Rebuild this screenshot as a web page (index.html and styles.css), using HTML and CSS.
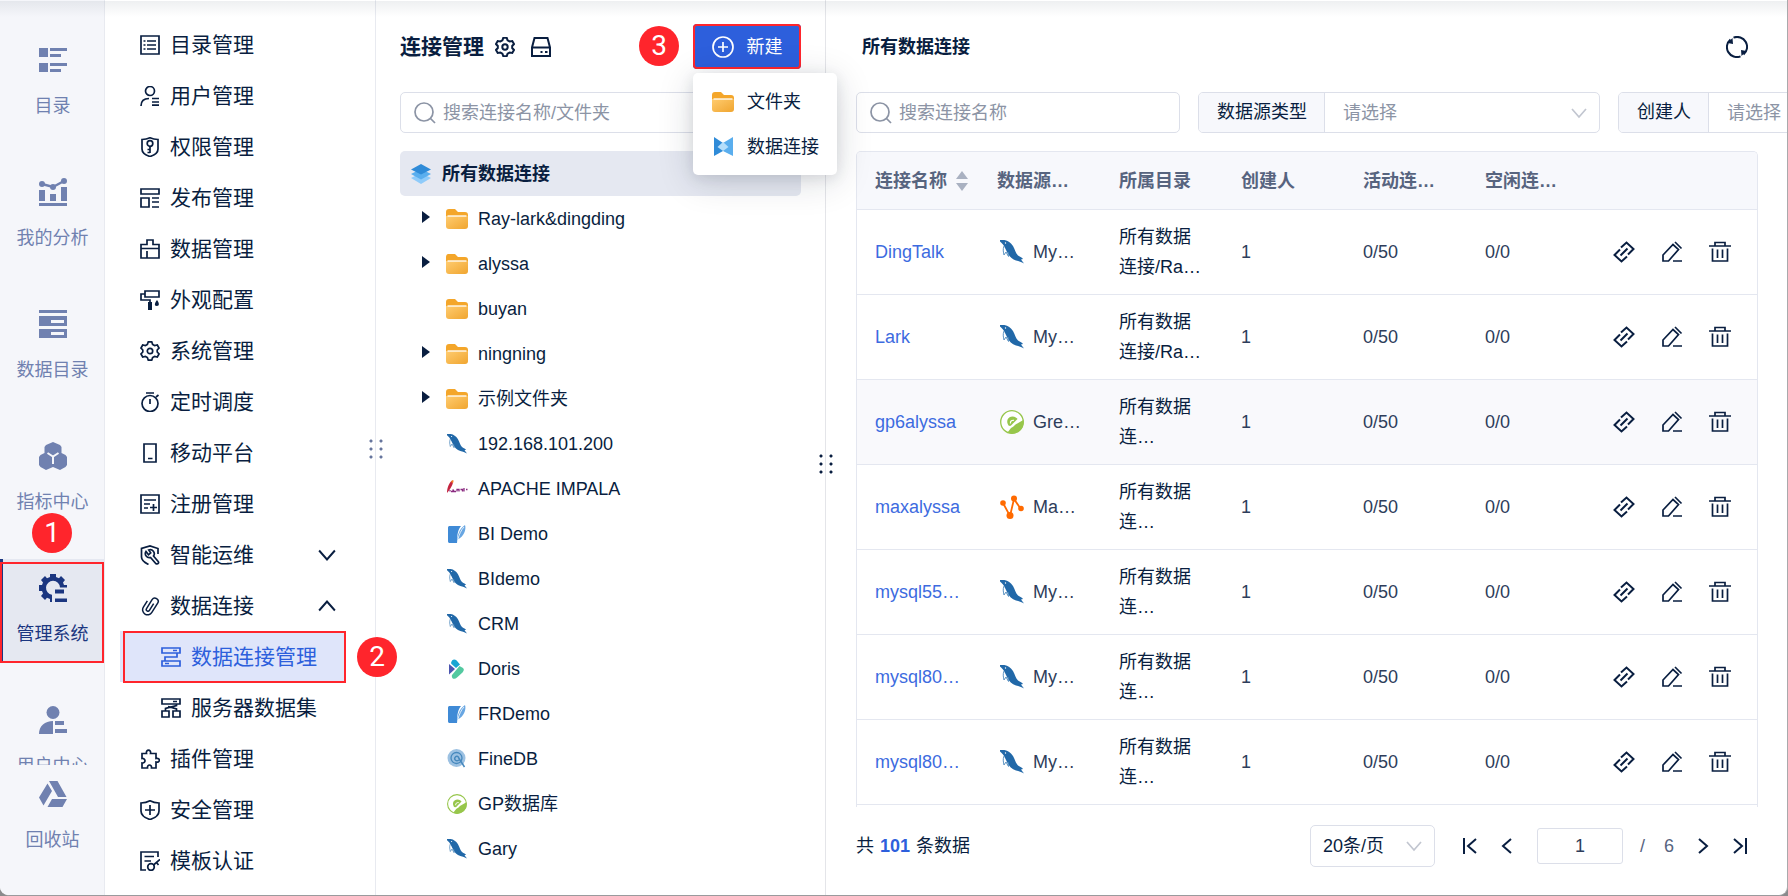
FILE: index.html
```html
<!DOCTYPE html>
<html lang="zh-CN">
<head>
<meta charset="utf-8">
<title>数据连接管理</title>
<link rel="stylesheet" href="styles.css">
</head>
<body>
<svg class="sprite" aria-hidden="true">
  <defs>
    <linearGradient id="folder-fill" x1="0" y1="0" x2="1" y2="1">
      <stop offset="0" stop-color="#ffcc70"/><stop offset="1" stop-color="#f0a52f"/>
    </linearGradient>
  </defs>

  <!-- primary navigation, solid -->
  <symbol id="n-catalog" viewBox="0 0 28 28"><path d="M0 2h9v9H0zM11 2h17v3H11zM11 8h11v3H11zM0 17h9v9H0zM11 17h17v3H11zM11 23h11v3H11z"/></symbol>
  <symbol id="n-analysis" viewBox="0 0 28 28"><path d="M0 12h6v11H0zM11 16h6v7h-6zM22 9h6v14h-6zM0 25h28v3H0z"/><circle cx="3" cy="6" r="3"/><circle cx="14" cy="9" r="3"/><circle cx="25" cy="3" r="3"/><path d="M3 6l11 3 11-6" fill="none" stroke="currentColor" stroke-width="2.500"/></symbol>
  <symbol id="n-data" viewBox="0 0 28 28"><path d="M0 0h28v3H0z"/><path fill-rule="evenodd" d="M0 6h28v10H0zM12 10v3h13v-3zM0 19h28v9H0zM12 22v3h13v-3z"/></symbol>
  <symbol id="n-metric" viewBox="0 0 28 28"><path d="M14 0l7 3 1.500 2v6l4 2 1.500 2v8l-1.500 2-5.500 3-7-3-7 3-5.500-3L0 23v-8l1.500-2 4-2V5L7 3z"/><path d="M8.500 11l5.500 3.500 5.500-3.500M14 14.500V22" fill="none" stroke="#f5f6fa" stroke-width="2"/></symbol>
  <symbol id="n-system" viewBox="0 0 28 28"><path d="M11 0h6v3l3 1.200L22 2l4 4-2 2.500 1 2.500h3v2.500h-7A7 7 0 1 0 13 20.800V28h-2v-3l-3-1.200L6 26l-4-4 2-2.500L3 17H0v-6h3l1-2.500L2 6l4-4 2 2.200L11 3z"/><path d="M16 15.500h9v4h-9zM16 24.500h12V28H16z"/></symbol>
  <symbol id="n-user" viewBox="0 0 28 28"><circle cx="14" cy="6.500" r="6.500"/><path d="M14 15v13H0C0 20 6 15 14 15zM16 15h9v4h-9zM16 23h12v4H16z"/></symbol>
  <symbol id="n-recycle" viewBox="0 0 28 28"><path d="M10 1h8.500L27.500 17H19zM8.500 3.500L13 11 4.500 25.500 0 17.500zM13 19h15l-4.500 8H8.500z"/></symbol>

  <!-- admin menu, outline -->
  <symbol id="m-list" viewBox="0 0 20 20"><path d="M1 1h18v18H1zM7 6h9M7 10h9M7 14h9M3.500 6h2M3.500 10h2M3.500 14h2"/></symbol>
  <symbol id="m-user" viewBox="0 0 20 20"><circle cx="10" cy="5" r="4.500"/><path d="M1 20c0-5 3-7.500 8-7.500M12 12.500h7M12 16h7M12 19.200h7"/></symbol>
  <symbol id="m-key" viewBox="0 0 20 20"><path d="M10 .8c3 1.400 5 1.700 8 1.700V12c0 4-3 6-8 7.500C5 18 2 16 2 12V2.500c3 0 5-.3 8-1.700z"/><circle cx="10" cy="6.500" r="2.800"/><path d="M10 9.300V16M10 12.500H7.500M10 15.500H7.500"/></symbol>
  <symbol id="m-publish" viewBox="0 0 20 20"><path d="M1 1h18v5H1zM1 10h8v9H1zM12 10h7M12 14h7M12 19h7"/></symbol>
  <symbol id="m-data" viewBox="0 0 20 20"><path d="M1 5.500h6V1h6v4.500h6V19H1zM1 9.500h18M7 12v7"/></symbol>
  <symbol id="m-paint" viewBox="0 0 20 20"><path d="M5 1h14v6H5zM5 4H1v6h9v3"/><path class="solid" d="M8 12h4v8H8zM17 10c2 2.500 3 6-.2 6S15 12.500 17 10z"/></symbol>
  <symbol id="m-gear" viewBox="0 0 20 20"><path d="M8.300.8h3.400l.9 2.600 2 1.100 2.700-.5 1.700 3-1.800 2v2l1.800 2-1.700 3-2.700-.5-2 1.100-.9 2.600H8.300l-.9-2.600-2-1.100-2.700.5-1.700-3 1.800-2V9L1 7l1.700-3 2.700.5 2-1.100z"/><circle cx="10" cy="10" r="2.700"/></symbol>
  <symbol id="m-timer" viewBox="0 0 20 20"><circle cx="10" cy="11.500" r="8"/><path d="M6 1h8M10 7v5M16 5l2.500-2"/></symbol>
  <symbol id="m-phone" viewBox="0 0 20 20"><path d="M4 1h12v18H4zM8 15.500h4.500"/></symbol>
  <symbol id="m-register" viewBox="0 0 20 20"><path d="M1 1h18v18H1zM4 6h12M4 10h6M4 14h4M10 13.500h7M13.500 10v7"/></symbol>
  <symbol id="m-wrench" viewBox="0 0 20 20"><path d="M18 9V3.500L10 1 1.500 3.500V12c0 3.500 3 5.500 7 7.500"/><path d="M6 6.500a4 4 0 0 0 4.500 6l5.500 6.200c2 .8 3.200-.8 2.200-2.200L13.500 11a4 4 0 0 0-4.800-6l2 2.800-2.200 2z"/></symbol>
  <symbol id="m-clip" viewBox="0 0 20 20"><path transform="rotate(32 10 10)" stroke-width="1.500" d="M5 7v7.500a5 5 0 0 0 10 0V3.500a3.300 3.300 0 0 0-6.600 0V14a1.700 1.700 0 0 0 3.400 0V6"/></symbol>
  <symbol id="m-conn" viewBox="0 0 20 20"><path d="M1 1h18v5H1zM1 14h18v5H1zM12 3.500h4M4 16.500h4M16 6v4H4v4"/></symbol>
  <symbol id="m-server" viewBox="0 0 20 20"><path d="M1 1h18v5H1zM1 13h7v6H1zM12 13h7v6h-7zM12 3.500h4M15.500 6v1.500L4.500 10.500V13M7 8.500L15.500 11v2"/></symbol>
  <symbol id="m-plugin" viewBox="0 0 20 20"><path d="M2 4.500h4.500C5.500 0 11.500 0 10.500 4.500H16v5c4.500-1 4.500 4.500 0 3.500v6h-4.500c.5-4-4.500-4-4 0H2v-5c4 .5 4-5 0-4.500z"/></symbol>
  <symbol id="m-shield" viewBox="0 0 20 20"><path d="M10 .8c3 1.700 5.500 2.200 9 2.200v8c0 4.500-4 7-9 8.500-5-1.500-9-4-9-8.500V3c3.500 0 6-.5 9-2.200zM10 5v10M5 10h10"/></symbol>
  <symbol id="m-cert" viewBox="0 0 20 20"><path d="M18 6V1H1v18h5M4.500 5.500H14M4.500 10H11"/><circle cx="11" cy="16" r="3.300"/><path d="M13.500 14L20 8.500M16.500 11.500l2 2.500"/></symbol>
  <symbol id="i-drive" viewBox="0 0 20 20"><path d="M3.500 1h13L19 10.500V19H1v-8.500zM1 10.500h18M9.500 15h2M14 15h2.500"/></symbol>
  <symbol id="i-search" viewBox="0 0 22 22"><circle cx="10" cy="10" r="9"/><path d="M16.500 16.500L21 21"/></symbol>
  <symbol id="i-plus" viewBox="0 0 22 22"><circle cx="11" cy="11" r="10"/><path d="M11 6v10M6 11h10"/></symbol>
  <symbol id="i-refresh" viewBox="0 0 22 22"><path d="M7.500 1.600a10 10 0 0 1 10 17M14.500 20.400a10 10 0 0 1-10-17"/><path class="solid" d="M1.500 7l5-5 .5 6zM20.500 15l-5 5-.5-6z"/></symbol>
  <symbol id="i-down" viewBox="0 0 16 16"><path d="M1 4l7 8 7-8"/></symbol>
  <symbol id="i-up" viewBox="0 0 16 16"><path d="M1 12l7-8 7 8"/></symbol>

  <!-- row actions -->
  <symbol id="a-link" viewBox="0 0 22 22"><path stroke-width="2" d="M8 6.500L13.500 1.500 20.500 8 15 13.500M14 15.500L8.500 20.500 1.500 14 7 8.500M7.500 14.500l7-7"/></symbol>
  <symbol id="a-edit" viewBox="0 0 22 22"><path d="M2 14L12 3.500l5.500 5L7.500 20H2zM14 1l6.500 6.500M12 20h9"/></symbol>
  <symbol id="a-trash" viewBox="0 0 22 22"><path d="M0 5h22M6 5V1.500h10V5M3.500 7.500V20h15V7.500M8.500 8.500V17M13.500 8.500V17"/></symbol>

  <!-- tree and source icons -->
  <symbol id="t-folder" viewBox="0 0 22 20"><path d="M0 3c0-2 1-3 3-3h6l3 3h7c2 0 3 1 3 3v5H0z" fill="#f4a62a"/><path d="M0 7h22v10c0 2-1 3-3 3H3c-2 0-3-1-3-3z" fill="url(#folder-fill)"/><path d="M1.500 7h19" stroke="#fff" stroke-width="1.300"/></symbol>
  <symbol id="t-layers" viewBox="0 0 20 20"><path d="M10 9l10 5-10 6L0 14z" fill="#8fcbfa"/><path d="M10 5l10 5-10 5.500L0 10z" fill="#5aaeee"/><path d="M10 0l10 5.500-10 5L0 5.500z" fill="#2f8bd8"/></symbol>
  <symbol id="t-conn" viewBox="0 0 20 20"><path d="M1 0l9 6v8l-9 5z" fill="#2f8bd8"/><path d="M20 0l-10 6v8l10 5z" fill="#5aaeee"/><path d="M10 5l5.500 5L10 14l-5.500-4z" fill="#b5defb"/></symbol>
  <symbol id="d-mysql" viewBox="0 0 24 24"><path d="M0 0c6-.8 10 1.500 13 6 2.200 3.600 2.500 7 5 9.500 2.500 1.700 4 2 5 3.500l-2 .5 3 4c-2.500-1.500-5-2.200-8-3-4-1-7-4.500-9-8.500C5.500 9 4 4.500 0 1.500z" fill="#2168a8"/><path d="M4 6c-1.500 4-.5 6 0 9l2-3 2.500 4.500L8 12" fill="none" stroke="#5a92c2" stroke-width="1"/><circle cx="5.500" cy="3" r=".7" fill="#fff"/></symbol>
  <symbol id="d-impala" viewBox="0 0 22 20"><path d="M1 14C1 9 3 4 6 1.500c1.500 1 1 3 0 5-1.300 3-3 5-5 7.500z" fill="#c4243f"/><path d="M5 3c1-1.600 1.500-2 2.200-2 .5 1 .3 2-.2 3z" fill="#f0852a"/><path d="M5 12.500h2v-2l1 2h2M11 12.500v-2h2v2M14.500 10.500h2v2M18 9v3.500M20 10.500h1.500M4 11v1.500" fill="none" stroke="#8a2a80" stroke-width="1.300"/></symbol>
  <symbol id="d-sqlite" viewBox="0 0 20 20"><path d="M1 4c0-1.500.5-2 2-2h11c-3 4-4 8-4 17H3c-1.500 0-2-.5-2-2z" fill="#3f8ad6"/><path d="M18 1c1.500 4-1 12-7.500 14.500L10 19c0-7 2-14 8-18z" fill="#68a6e2"/><path d="M17 3c-3 3-5 8-6 12" fill="none" stroke="#fff" stroke-width=".8"/></symbol>
  <symbol id="d-doris" viewBox="0 0 20 20"><path d="M2 5l6 5-6 5.500z" fill="#4b55b0"/><path d="M4 4c1-5 5-4 6.500-1.500L13 5.500 9 9 4.500 5z" fill="#17a5d2"/><path d="M12.500 7l3.500 2c1.500 1.500.8 3-.5 4.500L10 18.500c-2.500 2.500-6 1-5-2.500z" fill="#53c9a0"/></symbol>
  <symbol id="d-finedb" viewBox="0 0 20 20"><circle cx="9.500" cy="9" r="9" fill="#9cc1e2"/><circle cx="9.500" cy="9" r="5.500" fill="none" stroke="#4688bd" stroke-width="1.300"/><path d="M12 11c-3 2-5-.5-4-2.500s3.500-1.500 4 1l5.500 8.500" fill="none" stroke="#4688bd" stroke-width="1.500"/></symbol>
  <symbol id="d-green" viewBox="0 0 24 24"><circle cx="12" cy="12" r="11.300" fill="#fff" stroke="#97c64b" stroke-width="1.300"/><path d="M23.300 10A11.300 11.300 0 0 1 7.500 22.500L11 18c2-.8 3-2 4.500-3.500z" fill="#97c64b"/><path d="M8.500 15.500C5.500 11 8 6.500 12.500 6.500c2.500 0 4.500 1.500 5 2.500L11 15.500l-1 .5z" fill="#97c64b"/><path d="M10.500 13.500c-.5-2 1-3.500 3.500-3.200" fill="none" stroke="#fff" stroke-width="1.200"/></symbol>
  <symbol id="d-max" viewBox="0 0 24 24"><path d="M3 8l7 13 4-17 7.500 11" fill="none" stroke="#ff6a00" stroke-width="1.800"/><g fill="#ff6a00"><circle cx="3" cy="8" r="2.800"/><circle cx="10" cy="20.500" r="3.500"/><circle cx="14" cy="3.500" r="3"/><circle cx="21" cy="13.500" r="2.800"/></g></symbol>
</svg>

<div class="window">
  <nav class="rail" aria-label="主导航">
    <div class="rail-list">
      <a class="rail-item" href="#"><svg><use href="#n-catalog"/></svg><span>目录</span></a>
      <a class="rail-item" href="#"><svg><use href="#n-analysis"/></svg><span>我的分析</span></a>
      <a class="rail-item" href="#"><svg><use href="#n-data"/></svg><span>数据目录</span></a>
      <a class="rail-item" href="#"><svg><use href="#n-metric"/></svg><span>指标中心</span></a>
      <a class="rail-item active" href="#"><svg><use href="#n-system"/></svg><span>管理系统</span><b class="step step-1">1</b></a>
      <a class="rail-item" href="#"><svg><use href="#n-user"/></svg><span>用户中心</span></a>
    </div>
    <a class="rail-item rail-foot" href="#"><svg><use href="#n-recycle"/></svg><span>回收站</span></a>
  </nav>

  <nav class="menu" aria-label="管理系统">
    <a class="menu-item" href="#"><svg><use href="#m-list"/></svg><span>目录管理</span></a>
    <a class="menu-item" href="#"><svg><use href="#m-user"/></svg><span>用户管理</span></a>
    <a class="menu-item" href="#"><svg><use href="#m-key"/></svg><span>权限管理</span></a>
    <a class="menu-item" href="#"><svg><use href="#m-publish"/></svg><span>发布管理</span></a>
    <a class="menu-item" href="#"><svg><use href="#m-data"/></svg><span>数据管理</span></a>
    <a class="menu-item" href="#"><svg><use href="#m-paint"/></svg><span>外观配置</span></a>
    <a class="menu-item" href="#"><svg><use href="#m-gear"/></svg><span>系统管理</span></a>
    <a class="menu-item" href="#"><svg><use href="#m-timer"/></svg><span>定时调度</span></a>
    <a class="menu-item" href="#"><svg><use href="#m-phone"/></svg><span>移动平台</span></a>
    <a class="menu-item" href="#"><svg><use href="#m-register"/></svg><span>注册管理</span></a>
    <a class="menu-item" href="#"><svg><use href="#m-wrench"/></svg><span>智能运维</span><svg class="chevron"><use href="#i-down"/></svg></a>
    <a class="menu-item" href="#"><svg><use href="#m-clip"/></svg><span>数据连接</span><svg class="chevron"><use href="#i-up"/></svg></a>
    <a class="menu-item sub active" href="#"><svg><use href="#m-conn"/></svg><span>数据连接管理</span><b class="step step-2">2</b></a>
    <a class="menu-item sub" href="#"><svg><use href="#m-server"/></svg><span>服务器数据集</span></a>
    <a class="menu-item" href="#"><svg><use href="#m-plugin"/></svg><span>插件管理</span></a>
    <a class="menu-item" href="#"><svg><use href="#m-shield"/></svg><span>安全管理</span></a>
    <a class="menu-item" href="#"><svg><use href="#m-cert"/></svg><span>模板认证</span></a>
    <i class="grip grip-menu"></i>
  </nav>

  <section class="connections">
    <header class="panel-head">
      <h1>连接管理</h1>
      <button class="icon-btn" aria-label="设置"><svg><use href="#m-gear"/></svg></button>
      <button class="icon-btn" aria-label="驱动管理"><svg><use href="#i-drive"/></svg></button>
      <div class="create">
        <b class="step step-3">3</b>
        <button class="create-btn"><svg><use href="#i-plus"/></svg><span>新建</span></button>
        <div class="dropdown">
          <button><svg><use href="#t-folder"/></svg><span>文件夹</span></button>
          <button><svg><use href="#t-conn"/></svg><span>数据连接</span></button>
        </div>
      </div>
    </header>
    <label class="search"><svg><use href="#i-search"/></svg><input type="text" aria-label="搜索连接" placeholder="搜索连接名称/文件夹"></label>
    <ul class="tree">
      <li class="root"><svg><use href="#t-layers"/></svg><span>所有数据连接</span></li>
      <li class="parent"><svg class="folder"><use href="#t-folder"/></svg><span>Ray-lark&amp;dingding</span></li>
      <li class="parent"><svg class="folder"><use href="#t-folder"/></svg><span>alyssa</span></li>
      <li><svg class="folder"><use href="#t-folder"/></svg><span>buyan</span></li>
      <li class="parent"><svg class="folder"><use href="#t-folder"/></svg><span>ningning</span></li>
      <li class="parent"><svg class="folder"><use href="#t-folder"/></svg><span>示例文件夹</span></li>
      <li><svg><use href="#d-mysql"/></svg><span>192.168.101.200</span></li>
      <li><svg class="folder"><use href="#d-impala"/></svg><span>APACHE IMPALA</span></li>
      <li><svg><use href="#d-sqlite"/></svg><span>BI Demo</span></li>
      <li><svg><use href="#d-mysql"/></svg><span>BIdemo</span></li>
      <li><svg><use href="#d-mysql"/></svg><span>CRM</span></li>
      <li><svg><use href="#d-doris"/></svg><span>Doris</span></li>
      <li><svg><use href="#d-sqlite"/></svg><span>FRDemo</span></li>
      <li><svg><use href="#d-finedb"/></svg><span>FineDB</span></li>
      <li><svg><use href="#d-green"/></svg><span>GP数据库</span></li>
      <li><svg><use href="#d-mysql"/></svg><span>Gary</span></li>
    </ul>
    <i class="grip grip-tree"></i>
  </section>

  <main class="content">
    <header class="content-head">
      <h2>所有数据连接</h2>
      <button class="icon-btn refresh" aria-label="刷新"><svg><use href="#i-refresh"/></svg></button>
    </header>
    <div class="filters">
      <label class="search"><svg><use href="#i-search"/></svg><input type="text" aria-label="搜索名称" placeholder="搜索连接名称"></label>
      <div class="filter">
        <label for="source">数据源类型</label>
        <div class="select"><select id="source"><option>请选择</option></select><svg><use href="#i-down"/></svg></div>
      </div>
      <div class="filter">
        <label for="creator">创建人</label>
        <div class="select"><select id="creator"><option>请选择</option></select><svg><use href="#i-down"/></svg></div>
      </div>
    </div>
    <div class="table-box">
      <table>
        <colgroup><col class="c"><col class="c"><col class="c"><col class="c"><col class="c"><col class="c"><col></colgroup>
        <thead>
          <tr><th><span class="sortable">连接名称</span></th><th>数据源…</th><th>所属目录</th><th>创建人</th><th>活动连…</th><th>空闲连…</th><th></th></tr>
        </thead>
        <tbody>
          <tr><td><a href="#">DingTalk</a></td><td><span class="source"><svg><use href="#d-mysql"/></svg>My…</span></td><td class="dir">所有数据<br>连接/Ra…</td><td>1</td><td>0/50</td><td>0/0</td><td><div class="actions"><button aria-label="测试"><svg><use href="#a-link"/></svg></button><button aria-label="编辑"><svg><use href="#a-edit"/></svg></button><button aria-label="删除"><svg><use href="#a-trash"/></svg></button></div></td></tr>
          <tr><td><a href="#">Lark</a></td><td><span class="source"><svg><use href="#d-mysql"/></svg>My…</span></td><td class="dir">所有数据<br>连接/Ra…</td><td>1</td><td>0/50</td><td>0/0</td><td><div class="actions"><button aria-label="测试"><svg><use href="#a-link"/></svg></button><button aria-label="编辑"><svg><use href="#a-edit"/></svg></button><button aria-label="删除"><svg><use href="#a-trash"/></svg></button></div></td></tr>
          <tr class="hover"><td><a href="#">gp6alyssa</a></td><td><span class="source"><svg><use href="#d-green"/></svg>Gre…</span></td><td class="dir">所有数据<br>连…</td><td>1</td><td>0/50</td><td>0/0</td><td><div class="actions"><button aria-label="测试"><svg><use href="#a-link"/></svg></button><button aria-label="编辑"><svg><use href="#a-edit"/></svg></button><button aria-label="删除"><svg><use href="#a-trash"/></svg></button></div></td></tr>
          <tr><td><a href="#">maxalyssa</a></td><td><span class="source"><svg><use href="#d-max"/></svg>Ma…</span></td><td class="dir">所有数据<br>连…</td><td>1</td><td>0/50</td><td>0/0</td><td><div class="actions"><button aria-label="测试"><svg><use href="#a-link"/></svg></button><button aria-label="编辑"><svg><use href="#a-edit"/></svg></button><button aria-label="删除"><svg><use href="#a-trash"/></svg></button></div></td></tr>
          <tr><td><a href="#">mysql55…</a></td><td><span class="source"><svg><use href="#d-mysql"/></svg>My…</span></td><td class="dir">所有数据<br>连…</td><td>1</td><td>0/50</td><td>0/0</td><td><div class="actions"><button aria-label="测试"><svg><use href="#a-link"/></svg></button><button aria-label="编辑"><svg><use href="#a-edit"/></svg></button><button aria-label="删除"><svg><use href="#a-trash"/></svg></button></div></td></tr>
          <tr><td><a href="#">mysql80…</a></td><td><span class="source"><svg><use href="#d-mysql"/></svg>My…</span></td><td class="dir">所有数据<br>连…</td><td>1</td><td>0/50</td><td>0/0</td><td><div class="actions"><button aria-label="测试"><svg><use href="#a-link"/></svg></button><button aria-label="编辑"><svg><use href="#a-edit"/></svg></button><button aria-label="删除"><svg><use href="#a-trash"/></svg></button></div></td></tr>
          <tr><td><a href="#">mysql80…</a></td><td><span class="source"><svg><use href="#d-mysql"/></svg>My…</span></td><td class="dir">所有数据<br>连…</td><td>1</td><td>0/50</td><td>0/0</td><td><div class="actions"><button aria-label="测试"><svg><use href="#a-link"/></svg></button><button aria-label="编辑"><svg><use href="#a-edit"/></svg></button><button aria-label="删除"><svg><use href="#a-trash"/></svg></button></div></td></tr>
        </tbody>
      </table>
    </div>
    <footer class="pager">
      <p>共 <strong>101</strong> 条数据</p>
      <div class="select page-size"><select aria-label="每页条数"><option>20条/页</option></select><svg><use href="#i-down"/></svg></div>
      <button aria-label="首页"><svg viewBox="0 0 16 16"><path d="M2 0v16M14 1L6 8l8 7"/></svg></button>
      <button aria-label="上一页"><svg viewBox="0 0 16 16"><path d="M12 1L4 8l8 7"/></svg></button>
      <input type="text" aria-label="页码" value="1">
      <span class="total"><span>/</span><span>6</span></span>
      <button aria-label="下一页"><svg viewBox="0 0 16 16"><path d="M4 1l8 7-8 7"/></svg></button>
      <button aria-label="末页"><svg viewBox="0 0 16 16"><path d="M2 1l8 7-8 7M14 0v16"/></svg></button>
    </footer>
  </main>
</div>
</body>
</html>
```

FILE: styles.css
```css
:root {
  --ink: #091e40;
  --muted: #8c94a5;
  --line: #dcdfe9;
  --rail: #7081b0;
  --blue: #2d5fdc;
  --red: #ff252c;
}

* { box-sizing: border-box; }

body {
  margin: 0;
  background: #8a8a8c;
  color: var(--ink);
  font: 18px/30px "Liberation Sans", "Noto Sans CJK SC", sans-serif;
}

a { color: inherit; text-decoration: none; }
button { padding: 0; border: 0; background: none; color: inherit; font: inherit; }
input, select { font: inherit; color: inherit; outline: 0; }
h1, h2, p, ul { margin: 0; padding: 0; }
svg { flex: none; display: block; fill: none; stroke: currentColor; stroke-width: 1.7; }
.solid { fill: currentColor; stroke: none; }
.sprite { position: absolute; width: 0; height: 0; }

.window {
  position: relative;
  display: flex;
  height: 100vh;
  overflow: hidden;
  background: #fff;
  border-right: 1px solid #a9a9ac;
  border-bottom: 1px solid #9a9a9d;
  border-radius: 0 0 9px 9px;
}
.window::before {
  content: "";
  position: absolute;
  z-index: 5;
  inset: 1px 0 auto;
  height: 16px;
  background: linear-gradient(rgba(40, 60, 80, .08), rgba(40, 60, 80, 0));
  pointer-events: none;
}

/* numbered callouts */
.step {
  position: absolute;
  z-index: 4;
  width: 40px;
  height: 40px;
  border-radius: 50%;
  background: var(--red);
  color: #fff;
  font: 400 28px/40px Roboto, sans-serif;
  text-align: center;
}
.step-1 { left: 29px; top: -46px; }
.step-2 { right: -51px; top: 6px; }
.step-3 { right: 122px; top: 2px; }

/* primary rail */
.rail {
  flex: none;
  display: flex;
  flex-direction: column;
  width: 105px;
  background: #f5f6fa;
  border-right: 1px solid #e8eaf0;
  color: var(--rail);
}
.rail-list {
  flex: 1;
  min-height: 0;
  overflow: hidden;
  display: flex;
  flex-direction: column;
  gap: 28px;
  padding-top: 31px;
}
.rail-item {
  position: relative;
  flex: none;
  display: flex;
  flex-direction: column;
  align-items: center;
  gap: 17px;
  height: 104px;
  padding: 15px 0 0 1px;
}
.rail-item svg { width: 28px; height: 28px; fill: currentColor; stroke: none; }
.rail-item.active { background: #e5e8f1; border-left: 3px solid #1b3680; padding: 15px 2px 0 0; color: #1b3680; }
.rail-item.active::after {
  content: "";
  position: absolute;
  inset: 3px 0 0 -3px;
  border: 2px solid var(--red);
}
.rail-foot { height: 130px; }

/* admin menu */
.menu {
  position: relative;
  flex: none;
  width: 271px;
  padding: 19px 29px 0 15px;
  border-right: 1px solid #e8eaf0;
}
.menu-item {
  position: relative;
  display: flex;
  align-items: center;
  gap: 10px;
  height: 51px;
  padding: 0 10px 0 20px;
  font-size: 21px;
}
.menu-item > svg { width: 20px; height: 20px; }
.menu-item > .chevron { width: 18px; height: 18px; margin-left: auto; }
.menu-item.sub { padding-left: 41px; }
.menu-item.active { background: #dfe5fa; color: var(--blue); }
.menu-item.active::after {
  content: "";
  position: absolute;
  inset: 0 0 -1px 3px;
  border: 2px solid var(--red);
}

/* drag handles: 2 x 3 dots */
.grip {
  position: absolute;
  z-index: 2;
  width: 14px;
  height: 20px;
  background: radial-gradient(circle, currentColor 1px, transparent 2px) -3px -2px / 10px 8px;
}
.grip-menu { right: -8px; top: 439px; color: #66759d; }
.grip-tree { right: -8px; top: 454px; color: var(--ink); }

/* connection tree */
.connections {
  position: relative;
  flex: none;
  width: 450px;
  padding: 24px 24px 0;
  border-right: 1px solid #e4e5e9;
}
.panel-head { display: flex; align-items: center; gap: 14px; height: 45px; }
.panel-head h1 { font-size: 21px; margin-right: -3px; }
.icon-btn { margin-right: 2px; }
.icon-btn svg { width: 20px; height: 20px; }
.panel-head .icon-btn svg { stroke-width: 2; }
.create { position: relative; margin-left: auto; }
.create-btn {
  display: flex;
  align-items: center;
  justify-content: center;
  gap: 13px;
  width: 108px;
  height: 45px;
  border-radius: 4px;
  background: var(--blue);
  color: #fff;
  outline: 2px solid var(--red);
  outline-offset: -2px;
}
.create-btn svg { width: 22px; height: 22px; }
.dropdown {
  position: absolute;
  z-index: 3;
  left: 0;
  top: 49px;
  width: 144px;
  padding: 6px 0;
  border-radius: 5px;
  background: #fff;
  box-shadow: 0 6px 36px rgba(20, 30, 50, .16), 0 3px 14px rgba(20, 30, 50, .1);
}
.dropdown button { display: flex; align-items: center; gap: 13px; width: 100%; height: 45px; padding-left: 19px; }
.dropdown svg { width: 22px; height: 20px; stroke: none; }

.search {
  display: flex;
  align-items: center;
  gap: 7px;
  height: 41px;
  padding: 0 13px;
  border: 1px solid var(--line);
  border-radius: 5px;
  background: #fff;
  color: var(--muted);
}
.search svg { width: 22px; height: 22px; }
.search input { flex: 1; min-width: 0; padding: 0; border: 0; background: none; }
.search input::placeholder { color: var(--muted); opacity: 1; }
.connections .search { margin: 23px 0 18px; }

.tree { list-style: none; }
.tree li { display: flex; align-items: center; gap: 10px; height: 45px; padding-left: 47px; }
.tree svg { width: 20px; height: 20px; stroke: none; }
.tree li svg:not(.folder) { margin-right: 1px; }
.tree .folder { width: 22px; margin-left: -1px; }
.tree .root { padding-left: 11px; border-radius: 5px; background: #e5e8f1; font-weight: 700; }
.tree .parent { padding-left: 22px; }
.tree .parent::before {
  content: "";
  border: solid transparent;
  border-width: 6px 0 6px 8px;
  border-left-color: var(--ink);
  margin: 0 7px 4px 0;
}

/* main panel */
.content {
  flex: 1;
  min-width: 0;
  overflow: hidden;
  padding: 24px 29px 0 30px;
}
.content-head { display: flex; align-items: center; justify-content: space-between; height: 45px; padding: 0 8px 0 6px; }
.content-head h2 { font-size: 18px; }
.refresh svg { width: 22px; height: 22px; stroke-width: 2; }
.filters { display: flex; gap: 18px; margin: 23px 0 18px; }
.filters .search { flex: none; width: 324px; }
.filter {
  flex: none;
  display: flex;
  width: 402px;
  height: 41px;
  border: 1px solid var(--line);
  border-radius: 5px;
  overflow: hidden;
}
.filter label { padding: 4px 17px 4px 18px; border-right: 1px solid var(--line); background: #f7f8fc; }
.select { position: relative; flex: 1; }
.select select { width: 100%; height: 100%; padding: 0 18px; border: 0; background: none; appearance: none; color: var(--muted); }
.select svg { position: absolute; right: 12px; top: 12px; width: 16px; height: 16px; color: #c2c6d0; pointer-events: none; }

.table-box { padding-bottom: 2px; border: 1px solid #e4e7f0; border-bottom: 0; border-radius: 5px 5px 0 0; overflow: hidden; }
table { width: 100%; table-layout: fixed; border-collapse: collapse; }
.c { width: 122px; }
th, td { padding: 12px 0 12px 18px; border-bottom: 1px solid #e4e7f0; text-align: left; white-space: nowrap; }
th { padding: 14px 0 13px 18px; background: #f7f8fc; color: #57647f; }
td { color: #2e3d5b; }
td a { color: #3d6be0; }
.dir { color: var(--ink); }
.hover { background: #f9f9fc; }
.sortable { display: flex; align-items: center; gap: 9px; }
.sortable::after {
  content: "";
  width: 12px;
  height: 20px;
  background: #a9b1c1;
  clip-path: polygon(50% 0, 100% 40%, 0 40%, 0 60%, 100% 60%, 50% 100%, 0 60%, 0 40%);
}
.source { display: flex; align-items: center; gap: 9px; padding-left: 3px; }
.source svg { width: 24px; height: 24px; stroke: none; }
.actions { display: flex; justify-content: flex-end; gap: 26px; padding-right: 26px; color: var(--ink); }
.actions svg { width: 22px; height: 22px; }

.pager { display: flex; align-items: center; padding-top: 18px; }
.pager p { margin-right: auto; }
.pager strong { margin: 0 1px; color: var(--blue); }
.pager .page-size { flex: none; width: 125px; height: 42px; margin-right: 17px; border: 1px solid var(--line); border-radius: 5px; }
.page-size select { padding: 0 12px; color: var(--ink); }
.pager button { width: 37px; height: 40px; display: grid; place-items: center; }
.pager button svg { width: 16px; height: 16px; stroke-width: 2; }
.pager input { width: 86px; height: 36px; margin: 0 13px 0 11px; border: 1px solid var(--line); border-radius: 3px; text-align: center; color: #2e3d5b; }
.total { display: flex; gap: 19px; margin: 0 10px 0 4px; color: #57647f; }
```
